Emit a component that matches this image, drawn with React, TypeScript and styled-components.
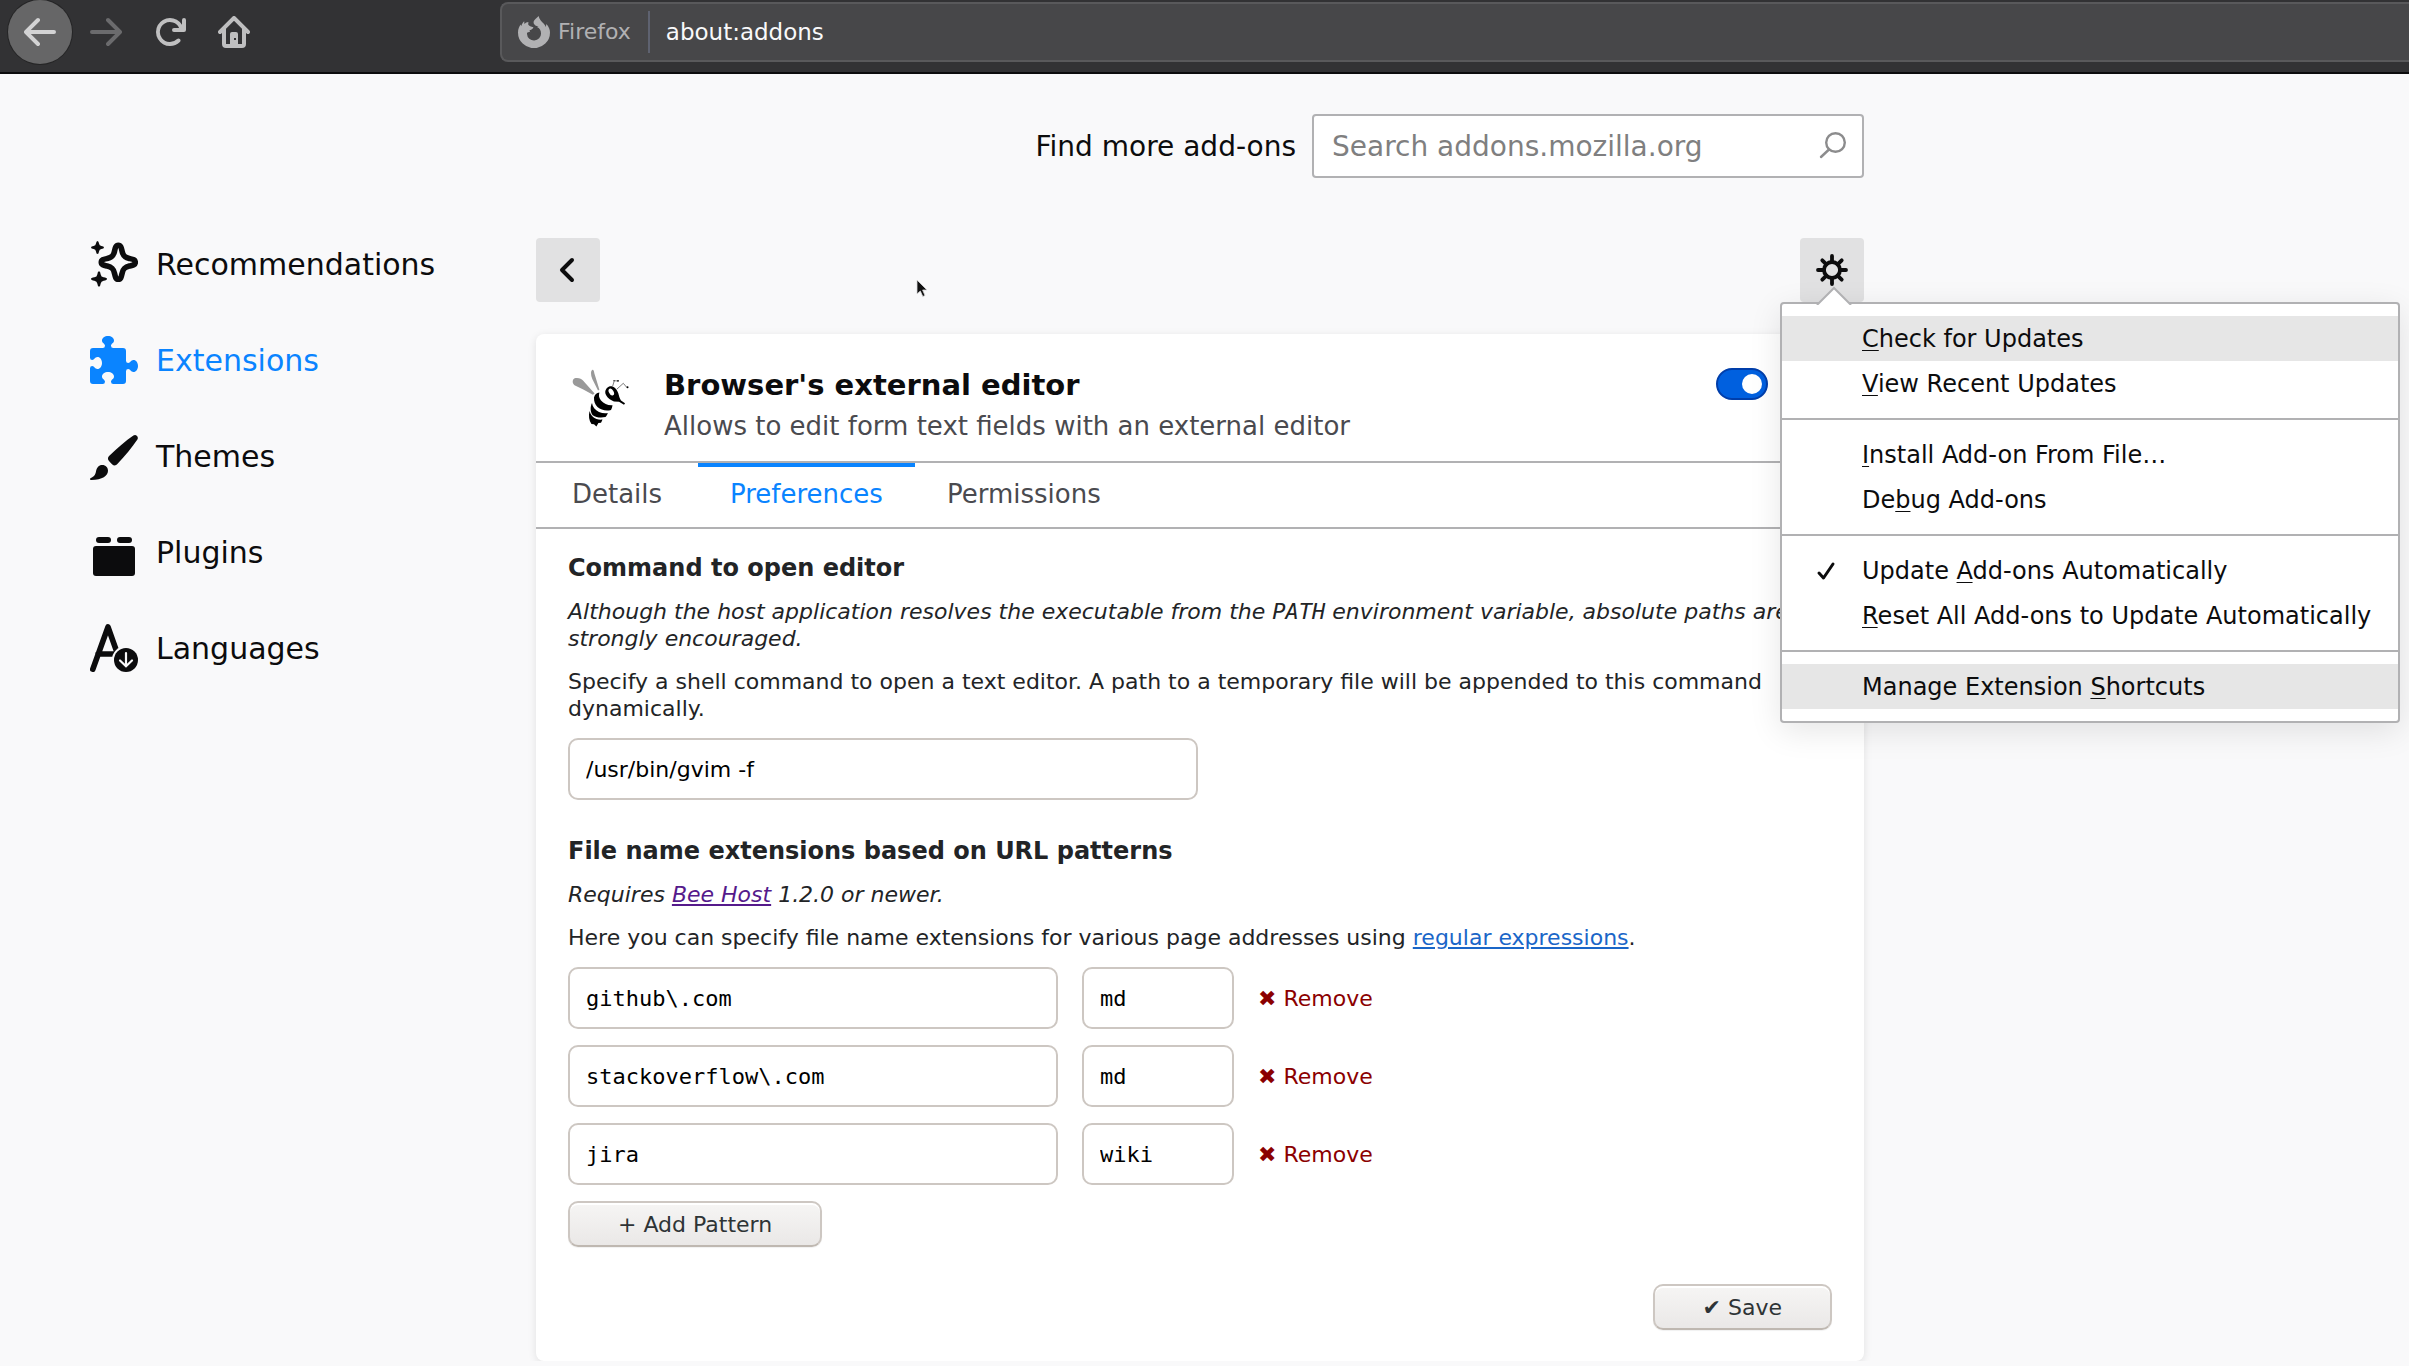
import React, { useState } from "react";
import styled, { createGlobalStyle, css } from "styled-components";

const sans = '"DejaVu Sans", Verdana, sans-serif';
const mono = '"DejaVu Sans Mono", monospace';

const GlobalStyle = createGlobalStyle`
  *, *::before, *::after { box-sizing: border-box; }
  body {
    margin: 0;
    background: #f9f9fa;
    color: #0c0c0d;
    font-family: ${sans};
    overflow-x: hidden;
  }
  button, input { font-family: inherit; margin: 0; }
  svg { display: block; flex: none; }
`;

/* Browser toolbar */

const Toolbar = styled.header`
  display: flex;
  align-items: flex-start;
  height: 74px;
  padding-left: 8px;
  background: #323234;
  border-bottom: 2px solid #0c0c0d;
`;

const ToolButton = styled.button`
  display: grid;
  place-items: center;
  width: 64px;
  height: 64px;
  padding: 0;
  border: 0;
  background: none;
  color: #bfbfc0;
  &:disabled { color: #6b6b6d; }
`;

const BackButton = styled(ToolButton)`
  margin-right: 2px;
  border-radius: 50%;
  background: #666667;
  box-shadow: 0 0 0 1px #252526;
  color: #d3d3d4;
`;

const UrlBar = styled.div`
  display: flex;
  flex: 1;
  align-items: center;
  height: 60px;
  margin: 2px 0 0 234px;
  padding-left: 16px;
  border: 2px solid #59595b;
  border-right: 0;
  border-radius: 8px 0 0 8px;
  background: #474749;
  color: #b1b1b3;
`;

const Identity = styled.span`
  margin-left: 8px;
  padding-right: 17px;
  border-right: 2px solid #5e6270;
  font-size: 22px;
  line-height: 42px;
`;

const UrlInput = styled.input`
  flex: 1;
  min-width: 0;
  padding: 0 0 0 16px;
  border: 0;
  outline: 0;
  background: none;
  color: #f9f9fa;
  font-size: 23px;
`;

/* Page frame */

const Page = styled.div`
  display: grid;
  grid-template-columns: 536px minmax(0, 1328px);
`;

const Sidebar = styled.nav`
  padding: 142px 0 0 90px;
`;

const NavLink = styled.a<{ $active?: boolean }>`
  display: flex;
  align-items: center;
  gap: 18px;
  height: 96px;
  color: ${(p) => (p.$active ? "#0a84ff" : "#0c0c0d")};
  font-size: 30px;
  text-decoration: none;
`;

const Main = styled.main`
  padding-top: 40px;
`;

const SearchRow = styled.form`
  display: flex;
  align-items: center;
  justify-content: flex-end;
  gap: 16px;
  font-size: 28px;
`;

const SearchBox = styled.div`
  display: flex;
  align-items: center;
  width: 552px;
  height: 64px;
  padding: 0 15px 0 18px;
  border: 2px solid #b1b1b3;
  border-radius: 4px;
  background: #fff;
`;

const SearchInput = styled.input`
  flex: 1;
  min-width: 0;
  padding: 0;
  border: 0;
  outline: 0;
  background: none;
  font-size: 28px;
  &::placeholder { color: #7f7f80; opacity: 1; }
`;

const ActionRow = styled.div`
  display: flex;
  justify-content: space-between;
  margin: 60px 0 32px;
`;

const SquareButton = styled.button`
  display: grid;
  place-items: center;
  width: 64px;
  height: 64px;
  padding: 0;
  border: 0;
  border-radius: 4px;
  background: #e1e1e2;
  color: #0c0c0d;
`;

/* Gear menu */

const MenuAnchor = styled.div`
  position: relative;
`;

const Menu = styled.div`
  position: absolute;
  z-index: 2;
  top: 64px;
  left: -20px;
  width: 620px;
  padding: 12px 0;
  border: 2px solid #b1b1b3;
  border-radius: 4px;
  background: #fff;
  box-shadow: 0 8px 32px rgba(12, 12, 13, 0.1);
`;

const MenuArrow = styled.svg`
  position: absolute;
  top: -18px;
  left: 34px;
`;

const MenuItem = styled.button<{ $highlight?: boolean }>`
  display: grid;
  grid-template-columns: 46px 1fr;
  align-items: center;
  width: 100%;
  height: 45px;
  padding: 0 0 0 34px;
  border: 0;
  background: ${(p) => (p.$highlight ? "#e6e6e6" : "none")};
  color: #0c0c0d;
  font-size: 24px;
  text-align: left;
  white-space: nowrap;
`;

const AccessKey = styled.span`
  text-decoration: underline 1px;
  text-underline-offset: 3px;
  text-decoration-skip-ink: none;
`;

const MenuRule = styled.hr`
  height: 2px;
  margin: 12px 0;
  border: 0;
  background: #b1b1b3;
`;

/* Add-on card */

const Card = styled.section`
  border-radius: 8px;
  background: #fff;
  box-shadow: 0 2px 8px rgba(12, 12, 13, 0.1);
`;

const CardHeader = styled.div`
  display: flex;
  align-items: flex-start;
  padding: 32px 96px 17px 32px;
`;

const CardTitles = styled.div`
  flex: 1;
  margin-left: 32px;
`;

const AddonName = styled.h1`
  margin: 0 0 4px;
  font-size: 29px;
  line-height: 38px;
`;

const AddonSummary = styled.p`
  margin: 0;
  color: #4a4a4f;
  font-size: 26px;
  line-height: 36px;
`;

const Toggle = styled.input`
  appearance: none;
  display: flex;
  align-items: center;
  width: 52px;
  height: 32px;
  margin: 2px 0 0;
  padding: 0 4px;
  border: 2px solid #003eaa;
  border-radius: 16px;
  background: #0060df;
  &::before {
    content: "";
    width: 20px;
    height: 20px;
    border-radius: 50%;
    background: #fff;
  }
  &:checked::before { margin-left: auto; }
`;

const Tabs = styled.div`
  display: flex;
  border: solid #b1b1b3;
  border-width: 2px 0;
`;

const Tab = styled.button<{ $active?: boolean }>`
  min-width: 162px;
  height: 64px;
  padding: 0 32px 2px;
  border: 0;
  background: none;
  box-shadow: ${(p) => (p.$active ? "inset 0 4px #0a84ff" : "none")};
  color: ${(p) => (p.$active ? "#0a84ff" : "#4a4a4f")};
  font-size: 26px;
`;

/* Preferences form */

const Prefs = styled.form`
  padding: 25px 32px 31px;
  color: #222426;
  font-size: 22px;
  line-height: 27px;
`;

const PrefsTitle = styled.h2<{ $spaced?: boolean }>`
  margin: ${(p) => (p.$spaced ? "37px" : "0")} 0 16px;
  font-size: 24px;
  line-height: 28px;
`;

const Paragraph = styled.p<{ $note?: boolean }>`
  margin: 0 0 16px;
  font-style: ${(p) => (p.$note ? "italic" : "normal")};
`;

const Code = styled.code`
  font-family: ${mono};
`;

const Link = styled.a<{ $visited?: boolean }>`
  color: ${(p) => (p.$visited ? "#551a8b" : "#1a66c8")};
`;

const field = css`
  display: block;
  height: 62px;
  padding: 0 16px;
  border: 2px solid #cdc7c2;
  border-radius: 10px;
  outline: 0;
  background: #fff;
  color: #000;
  font-size: 22px;
`;

const CommandInput = styled.input`
  ${field}
  width: 630px;
`;

const PatternRow = styled.div`
  display: grid;
  grid-template-columns: 490px 152px auto;
  justify-content: start;
  align-items: center;
  gap: 24px;
  margin-bottom: 16px;
`;

const PatternInput = styled.input`
  ${field}
  && { font-family: ${mono}; }
  width: 100%;
`;

const RemoveButton = styled.button`
  padding: 0;
  border: 0;
  background: none;
  color: #8b0000;
  font-size: 22px;
`;

const PushButton = styled.button`
  height: 46px;
  padding: 0 48px;
  border: 2px solid #cdc7c2;
  border-bottom-color: #bfb8b1;
  border-radius: 10px;
  background: linear-gradient(#f6f5f4, #eae8e7);
  box-shadow: inset 0 2px #fff, 0 1px 1px rgba(0, 0, 0, 0.06);
  color: #2e3436;
  font-size: 22px;
`;

const SaveRow = styled.div`
  display: flex;
  justify-content: flex-end;
  margin-top: 37px;
`;

const Cursor = styled.svg`
  position: absolute;
  top: 279px;
  left: 916px;
  pointer-events: none;
`;

/* Icons */

const Icon16 = ({ d, size = 32 }: { d: string; size?: number }) => (
  <svg width={size} height={size} viewBox="0 0 16 16" fill="currentColor" fillRule="evenodd" aria-hidden="true">
    <path d={d} />
  </svg>
);

const backPath =
  "M15 7H3.414l4.293-4.293a1 1 0 0 0-1.414-1.414l-6 6a1 1 0 0 0 0 1.414l6 6a1 1 0 0 0 1.414-1.414L3.414 9H15a1 1 0 0 0 0-2z";
const forwardPath =
  "M1 7H12.586l-4.293-4.293a1 1 0 0 1 1.414-1.414l6 6a1 1 0 0 1 0 1.414l-6 6a1 1 0 0 1-1.414-1.414L12.586 9H1a1 1 0 0 1 0-2z";
const reloadPath =
  "M15 1a1 1 0 0 0-1 1v2.418A6.995 6.995 0 1 0 8 15a6.954 6.954 0 0 0 4.95-2.05 1 1 0 0 0-1.414-1.414A5.019 5.019 0 1 1 12.549 6H10a1 1 0 0 0 0 2h5a1 1 0 0 0 1-1V2a1 1 0 0 0-1-1z";
const homePath =
  "M15.707 7.293l-7-7a1 1 0 0 0-1.414 0l-7 7a1 1 0 0 0 1.414 1.414L2 8.414V14a2 2 0 0 0 2 2h8a2 2 0 0 0 2-2V8.414l.293.293a1 1 0 0 0 1.414-1.414zM12 14h-2V9a1 1 0 0 0-1-1H7a1 1 0 0 0-1 1v5H4V6.414l4-4 4 4zM8 11h1v1H8z";
const puzzlePath =
  "M14.5 8c-.971 0-1 1-1.75 1a.765.765 0 0 1-.75-.75V5a1 1 0 0 0-1-1H7.75A.765.765 0 0 1 7 3.25c0-.75 1-.779 1-1.75C8 .635 7.1 0 6 0S4 .635 4 1.5c0 .971 1 1 1 1.75a.765.765 0 0 1-.75.75H1a1 1 0 0 0-1 1v2.25A.765.765 0 0 0 .75 8c.75 0 .779-1 1.75-1C3.365 7 4 7.9 4 9s-.635 2-1.5 2c-.971 0-1-1-1.75-1a.765.765 0 0 0-.75.75V15a1 1 0 0 0 1 1h3.25a.765.765 0 0 0 .75-.75c0-.75-1-.779-1-1.75 0-.865.9-1.5 2-1.5s2 .635 2 1.5c0 .971-1 1-1 1.75a.765.765 0 0 0 .75.75H11a1 1 0 0 0 1-1v-3.25a.765.765 0 0 1 .75-.75c.75 0 .779 1 1.75 1 .865 0 1.5-.9 1.5-2s-.635-2-1.5-2z";

const FirefoxIcon = () => (
  <svg width="32" height="32" viewBox="0 0 32 32" fill="currentColor" aria-hidden="true">
    <path d="M20.6 0C21.2 3.4 23.6 5.2 25.6 7.6C26.8 9 27.4 10 27.8 11L28.4 8C30.8 10.8 32 13.6 32 16.4A16 15.8 0 1 1 0 16.4C0 13 1.200 10.400 2.800 8.400L3.200 10.200C3.800 8.200 4.800 6.500 6.200 5.200L6.400 8C7.600 6.800 8.800 6.200 10.400 6L10.200 8.600C11.200 10.200 12.800 10.600 15.400 11.200C15.200 12.600 13.600 13.400 11.800 14.200C11.200 14.600 11.600 15.600 12.400 16.200C9.600 15.600 8.800 17 9 18A7 6.800 0 0 0 23 17.400C23 14.400 21.600 12.200 19 11L20.600 11C18 9.600 15.400 8.800 15.600 6.200C15.800 3.600 18.800 2.200 20.600 0Z" />
  </svg>
);

const SparkleIcon = () => (
  <svg width="48" height="48" viewBox="0 0 48 48" fill="currentColor" aria-hidden="true">
    <path
      transform="translate(28.3 22.3)"
      d="M0 -17C2.600 -17 3 -14.500 3.800 -11C4.800 -6.500 6.500 -4.800 11 -3.800C14.500 -3 17 -2.600 17 0S14.500 3 11 3.800C6.500 4.800 4.800 6.500 3.800 11C3 14.500 2.600 17 0 17S-3 14.500 -3.800 11C-4.800 6.500 -6.500 4.800 -11 3.800C-14.500 3 -17 2.600 -17 0S-14.500 -3 -11 -3.800C-6.500 -4.800 -4.800 -6.500 -3.800 -11C-3 -14.500 -2.600 -17 0 -17Z"
      fill="none"
      stroke="currentColor"
      strokeWidth="5.6"
    />
    <path d="M7.500 1Q8.700 1 9 3.600Q9.300 5.700 11.400 6Q14 6.300 14 7.500Q14 8.700 11.400 9Q9.300 9.300 9 11.400Q8.700 14 7.500 14Q6.300 14 6 11.400Q5.700 9.300 3.600 9Q1 8.700 1 7.500Q1 6.300 3.600 6Q5.700 5.700 6 3.600Q6.300 1 7.500 1Z" />
    <path d="M9 31.300Q10.300 31.300 10.700 34.400Q11 36.900 13.600 37.300Q17 37.700 17 39Q17 40.300 13.600 40.700Q11 41.100 10.700 43.600Q10.300 46.700 9 46.700Q7.700 46.700 7.300 43.600Q7 41.100 4.400 40.700Q1 40.300 1 39Q1 37.700 4.400 37.300Q7 36.900 7.300 34.400Q7.700 31.300 9 31.300Z" />
  </svg>
);

const BrushIcon = () => (
  <svg width="48" height="48" viewBox="0 0 48 48" fill="currentColor" aria-hidden="true">
    <path d="M43.400 3.600C45.800 1.800 49 4.800 47.400 7.600C42 15.600 35 24 27.600 31.800C25.600 34 24 34 22 32.200L19.200 29.300C17.400 27.400 17.600 25.600 19.600 23.600C27.400 16 35.600 9 43.400 3.600Z" />
    <path d="M12.200 33C15.800 33 18 35.600 18 38.800C18 43.800 12.600 48 1.200 48C-.2 48 -.4 46.400 .8 46C4.200 44.800 5.200 43 6 39.600C6.800 35.400 8.800 33 12.200 33Z" />
  </svg>
);

const PluginIcon = () => (
  <svg width="48" height="48" viewBox="0 0 48 48" fill="currentColor" aria-hidden="true">
    <rect x="6" y="9" width="15" height="6" rx="3" />
    <rect x="27" y="9" width="15" height="6" rx="3" />
    <rect x="3" y="18" width="42" height="30" rx="3" />
  </svg>
);

const LanguageIcon = () => (
  <svg width="48" height="48" viewBox="0 0 48 48" fill="none" stroke="currentColor" strokeWidth="5.6" aria-hidden="true">
    <path d="M2.800 45.200L18 3L26.500 27M8 30H24" strokeLinecap="round" strokeLinejoin="round" />
    <circle cx="36" cy="36" r="14" fill="#f9f9fa" stroke="none" />
    <circle cx="36" cy="36" r="12" fill="currentColor" stroke="none" />
    <path d="M36 29V42M30 36.500L36 42.300L42 36.500" stroke="#f9f9fa" strokeWidth="2.200" strokeLinecap="round" />
  </svg>
);

const SearchIcon = () => (
  <svg width="28" height="28" viewBox="0 0 28 28" fill="none" stroke="#8c8c8d" strokeWidth="2.400" aria-hidden="true">
    <circle cx="16.500" cy="10.500" r="9.300" />
    <path d="M10 17.500L2 25" strokeLinecap="round" />
  </svg>
);

const ChevronIcon = () => (
  <svg width="32" height="32" viewBox="0 0 32 32" fill="none" stroke="currentColor" strokeWidth="4" aria-hidden="true">
    <path d="M20 6L10 16L20 26" strokeLinecap="round" strokeLinejoin="round" />
  </svg>
);

const GearIcon = () => (
  <svg width="32" height="32" viewBox="0 0 32 32" fill="none" stroke="currentColor" strokeWidth="3.800" aria-hidden="true">
    <circle cx="16" cy="16" r="8" />
    <path
      d="M16 2V8M16 24V30M2 16H8M24 16H30M6.300 6.300L10.400 10.400M21.600 21.600L25.700 25.700M25.700 6.300L21.600 10.400M10.400 21.600L6.300 25.700"
      strokeLinecap="round"
    />
  </svg>
);

const CheckIcon = () => (
  <svg width="20" height="20" viewBox="0 0 20 20" fill="none" stroke="currentColor" strokeWidth="3" aria-hidden="true">
    <path d="M3 12L7.500 17L17 3" strokeLinecap="round" strokeLinejoin="round" />
  </svg>
);

const BeeIcon = () => (
  <svg width="64" height="64" viewBox="0 0 64 64" aria-hidden="true">
    <g fill="#999">
      <path d="M4.700 15C5 12.500 7 12 9 12C12 12 13.500 13 15 14.500L26.600 27.500L24.900 28.800L15.300 23.500L7.500 19.800C5.500 18.800 4.500 17 4.700 15Z" />
      <path d="M23 7C23 5 24 3.500 25 3.800C26 4.500 26 6 26.400 7.500L31.400 23.800L30 24.500L24.300 13C23.400 11 23 9 23 7Z" />
    </g>
    <g>
      <path d="M31.400 26.500C30.500 29.500 31 32 33 34.500C36 38 40 39.500 44.500 39.200C44.300 41 43.800 42.500 43 44C38 45.400 33 44 29.500 41C27 38.500 25.800 35.500 26 31.500C26.800 28.500 28.500 27 31.400 26.500Z" />
      <path d="M24 37C24.500 41 27 44 31 46C34 47.200 37 47.400 39.800 47C39.300 48.800 38.500 50 37.500 51C33 52 28 51.500 24.700 49.200C22.300 46 22 41 24 37Z" />
      <path d="M21.600 45C22.500 49 25 51.500 28.500 53C30.500 53.700 32.500 53.900 34.500 53.600C34 55 33.500 56 33 56.700L30.400 57L28.400 60.500L26 58.300L23.500 58C21 54.500 20.300 49.500 21.600 45Z" />
      <path d="M38.500 22.500C40 20.500 42 20 44 20.200C47 21.200 49 23.800 50.200 27C51 30 51.500 32 53 34.500L57 37.300C56.500 38.800 55.500 38.800 54.800 38L51 35.700L46 35.500C42 34 38.500 31 37.400 27.500C37 25.500 37.500 24 38.500 22.500Z" />
    </g>
    <ellipse cx="43.300" cy="26" rx="2.300" ry="3.800" fill="#fff" transform="rotate(-28 43.300 26)" />
    <path d="M44.700 20L46.300 14.700L49.700 15M48.700 23.300L55.300 17.300L58.700 21.300" fill="none" stroke="#444" strokeWidth="0.700" />
    <circle cx="50" cy="14.800" r="0.900" />
    <circle cx="46" cy="14.700" r="0.600" />
    <circle cx="59.500" cy="21.300" r="1" />
  </svg>
);

const navItems = [
  { label: "Recommendations", icon: <SparkleIcon /> },
  { label: "Extensions", icon: <Icon16 d={puzzlePath} size={48} />, active: true },
  { label: "Themes", icon: <BrushIcon /> },
  { label: "Plugins", icon: <PluginIcon /> },
  { label: "Languages", icon: <LanguageIcon /> },
];

/* An underscore marks the access key that follows it. */
const menuGroups = [
  [{ text: "_Check for Updates", highlight: true }, { text: "_View Recent Updates" }],
  [{ text: "_Install Add-on From File…" }, { text: "De_bug Add-ons" }],
  [
    { text: "Update _Add-ons Automatically", checked: true },
    { text: "_Reset All Add-ons to Update Automatically" },
  ],
  [{ text: "Manage Extension _Shortcuts", highlight: true }],
] as { text: string; highlight?: boolean; checked?: boolean }[][];

const MenuLabel = ({ text }: { text: string }) => {
  const at = text.indexOf("_");
  return (
    <span>
      {text.slice(0, at)}
      <AccessKey>{text[at + 1]}</AccessKey>
      {text.slice(at + 2)}
    </span>
  );
};

const tabs = ["Details", "Preferences", "Permissions"];

export default function App() {
  const [tab, setTab] = useState("Preferences");
  const [patterns, setPatterns] = useState([
    { url: "github\\.com", ext: "md" },
    { url: "stackoverflow\\.com", ext: "md" },
    { url: "jira", ext: "wiki" },
  ]);

  const update = (index: number, change: { url?: string; ext?: string }) =>
    setPatterns(patterns.map((p, i) => (i === index ? { ...p, ...change } : p)));

  return (
    <>
      <GlobalStyle />
      <Toolbar>
        <BackButton aria-label="Back"><Icon16 d={backPath} /></BackButton>
        <ToolButton aria-label="Forward" disabled><Icon16 d={forwardPath} /></ToolButton>
        <ToolButton aria-label="Reload"><Icon16 d={reloadPath} /></ToolButton>
        <ToolButton aria-label="Home"><Icon16 d={homePath} /></ToolButton>
        <UrlBar>
          <FirefoxIcon />
          <Identity>Firefox</Identity>
          <UrlInput aria-label="Address" defaultValue="about:addons" />
        </UrlBar>
      </Toolbar>

      <Page>
        <Sidebar>
          {navItems.map((item) => (
            <NavLink key={item.label} href="#" $active={item.active}>
              {item.icon}
              {item.label}
            </NavLink>
          ))}
        </Sidebar>

        <Main>
          <SearchRow onSubmit={(e) => e.preventDefault()}>
            <label htmlFor="search">Find more add-ons</label>
            <SearchBox>
              <SearchInput id="search" placeholder="Search addons.mozilla.org" />
              <SearchIcon />
            </SearchBox>
          </SearchRow>

          <ActionRow>
            <SquareButton aria-label="Go back"><ChevronIcon /></SquareButton>
            <MenuAnchor>
              <SquareButton aria-label="Tools for all add-ons"><GearIcon /></SquareButton>
              <Menu role="menu">
                <MenuArrow width="36" height="19" viewBox="0 0 36 19" aria-hidden="true">
                  <path d="M1 19L18 2L35 19" fill="#fff" stroke="#b1b1b3" strokeWidth="2" />
                </MenuArrow>
                {menuGroups.map((group, g) => (
                  <React.Fragment key={g}>
                    {g > 0 && <MenuRule />}
                    {group.map((item) => (
                      <MenuItem key={item.text} role="menuitem" $highlight={item.highlight}>
                        <span>{item.checked && <CheckIcon />}</span>
                        <MenuLabel text={item.text} />
                      </MenuItem>
                    ))}
                  </React.Fragment>
                ))}
              </Menu>
            </MenuAnchor>
          </ActionRow>

          <Card>
            <CardHeader>
              <BeeIcon />
              <CardTitles>
                <AddonName>Browser's external editor</AddonName>
                <AddonSummary>Allows to edit form text fields with an external editor</AddonSummary>
              </CardTitles>
              <Toggle type="checkbox" role="switch" defaultChecked aria-label="Enable extension" />
            </CardHeader>

            <Tabs role="tablist">
              {tabs.map((name) => (
                <Tab key={name} role="tab" aria-selected={tab === name} $active={tab === name} onClick={() => setTab(name)}>
                  {name}
                </Tab>
              ))}
            </Tabs>

            <Prefs onSubmit={(e) => e.preventDefault()}>
              <PrefsTitle>Command to open editor</PrefsTitle>
              <Paragraph $note>
                Although the host application resolves the executable from the <Code>PATH</Code> environment
                variable, absolute paths are strongly encouraged.
              </Paragraph>
              <Paragraph>
                Specify a shell command to open a text editor. A path to a temporary file will be appended to
                this command dynamically.
              </Paragraph>
              <CommandInput aria-label="Command to open editor" defaultValue="/usr/bin/gvim -f" />

              <PrefsTitle $spaced>File name extensions based on URL patterns</PrefsTitle>
              <Paragraph $note>
                Requires <Link href="#" $visited>Bee Host</Link> 1.2.0 or newer.
              </Paragraph>
              <Paragraph>
                Here you can specify file name extensions for various page addresses using{" "}
                <Link href="#">regular expressions</Link>.
              </Paragraph>

              {patterns.map((p, i) => (
                <PatternRow key={i}>
                  <PatternInput aria-label="URL pattern" value={p.url} onChange={(e) => update(i, { url: e.target.value })} />
                  <PatternInput aria-label="File extension" value={p.ext} onChange={(e) => update(i, { ext: e.target.value })} />
                  <RemoveButton type="button" onClick={() => setPatterns(patterns.filter((_, n) => n !== i))}>
                    ✖ Remove
                  </RemoveButton>
                </PatternRow>
              ))}
              <PushButton type="button" onClick={() => setPatterns([...patterns, { url: "", ext: "" }])}>
                + Add Pattern
              </PushButton>

              <SaveRow>
                <PushButton type="submit">✔ Save</PushButton>
              </SaveRow>
            </Prefs>
          </Card>
        </Main>
      </Page>

      <Cursor width="14" height="20" viewBox="0 0 14 20" aria-hidden="true">
        <path d="M1 1V15L4.300 12L6.800 17.500L9 16.500L6.600 11H11Z" fill="#111" stroke="#d8d8d8" strokeWidth="0.800" />
      </Cursor>
    </>
  );
}
